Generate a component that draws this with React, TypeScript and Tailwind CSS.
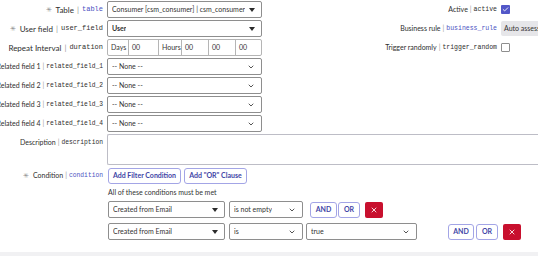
import { ChevronDown, Check, X } from 'lucide-react';

const Caret = () => (
  <svg width="6" height="4" viewBox="0 0 6 4" className="shrink-0">
    <path d="M0 0h6L3 4z" fill="#2b2b2b" />
  </svg>
);

const Label = ({ name, field, link, req, top, big }: { name: string; field: string; link?: boolean; req?: boolean; top?: boolean; big?: boolean }) => (
  <div className={`w-[103px] shrink-0 h-[17px] flex justify-end items-center whitespace-nowrap text-[#2e2e2e] ${big ? 'text-[8px]' : 'text-[7px]'} ${top ? 'self-start' : ''}`}>
    {req && <span className="text-[#8a8a8a] mr-[4px] text-[7px]">✳</span>}
    <span>{name}</span>
    <span className={`text-[#9a9a9a] ${big ? 'mx-[3px]' : 'mx-[2px]'}`}>|</span>
    <span className={`font-['Liberation_Mono',monospace] ${big ? 'text-[7px]' : 'text-[6.3px]'} ${link ? 'text-[#4b51c2]' : 'text-[#2e2e2e]'}`}>{field}</span>
  </div>
);

const Select = ({ text, w, chevron, bold }: { text: string; w: string; chevron?: boolean; bold?: boolean }) => (
  <div className={`${w} h-[17px] shrink-0 border border-[#8e8e8e] rounded-[2px] bg-white flex items-center justify-between pl-[4px] pr-[6px] text-[7px] text-[#333] ${bold ? 'font-bold' : ''}`}>
    <span className="truncate">{text}</span>
    {chevron ? <ChevronDown size={8} strokeWidth={2.5} color="#333" /> : <Caret />}
  </div>
);

const Btn = ({ children, w }: { children: React.ReactNode; w: string }) => (
  <div className={`${w} h-[16px] shrink-0 border border-[#a3a5e6] rounded-[3px] bg-white flex items-center justify-center text-[7px] font-bold text-[#4145a6]`}>
    {children}
  </div>
);

const Del = () => (
  <div className="w-[18px] h-[16px] shrink-0 bg-[#c8102e] rounded-[2px] flex items-center justify-center">
    <X size={8} strokeWidth={2.5} color="#fff" />
  </div>
);

const Right = ({ name, field, link, children }: { name: string; field: string; link?: boolean; children: React.ReactNode }) => (
  <div className="flex-1 flex items-center justify-end whitespace-nowrap text-[7px] text-[#2e2e2e]">
    <span>{name}</span>
    <span className="text-[#9a9a9a] mx-[2px]">|</span>
    <span className={`font-['Liberation_Mono',monospace] text-[6.5px] ${link ? 'text-[#4b51c2]' : ''}`}>{field}</span>
    <div className="w-[37px] ml-[4px] shrink-0 flex">{children}</div>
  </div>
);

const Box = ({ text, w }: { text: string; w: string }) => (
  <div className={`${w} h-[15px] border-r border-[#b5b5b5] last:border-r-0 flex items-center pl-[3px] text-[7px] text-[#333]`}>{text}</div>
);

export default function App() {
  return (
    <div className="w-[538px] h-[256px] overflow-hidden bg-white font-['Lato',sans-serif] flex flex-col">
      <div className="pt-[1px] flex flex-col gap-[2px]">
        <div className="flex items-center gap-[4px]">
          <Label name="Table" field="table" link req big />
          <Select text="Consumer [csm_consumer] | csm_consumer" w="w-[155px]" />
          <Right name="Active" field="active">
            <div className="w-[9px] h-[9px] bg-[#5257c8] rounded-[1px] flex items-center justify-center">
              <Check size={7} strokeWidth={3} color="#fff" />
            </div>
          </Right>
        </div>
        <div className="flex items-center gap-[4px]">
          <Label name="User field" field="user_field" req big />
          <Select text="User" w="w-[155px]" bold />
          <Right name="Business rule" field="business_rule" link>
            <div className="w-[60px] h-[15px] bg-[#e6e6e9] rounded-l-[2px] flex items-center pl-[3px] text-[7px] text-[#333] whitespace-nowrap">Auto assess</div>
          </Right>
        </div>
        <div className="flex items-center gap-[4px]">
          <Label name="Repeat Interval" field="duration" big />
          <div className="w-[155px] h-[17px] shrink-0 border border-[#b5b5b5] rounded-[2px] flex">
            <Box text="Days" w="w-[21px]" />
            <Box text="00" w="w-[30px]" />
            <Box text="Hours" w="w-[23px]" />
            <Box text="00" w="w-[27px]" />
            <Box text="00" w="w-[27px]" />
            <Box text="00" w="flex-1" />
          </div>
          <Right name="Trigger randomly" field="trigger_random">
            <div className="w-[9px] h-[9px] border border-[#8e8e8e] rounded-[1px] bg-white" />
          </Right>
        </div>
        {[1, 2, 3, 4].map((n) => (
          <div key={n} className="flex items-center gap-[4px]">
            <Label name={`Related field ${n}`} field={`related_field_${n}`} />
            <Select text="-- None --" w="w-[155px]" chevron />
          </div>
        ))}
        <div className="flex gap-[4px]">
          <Label name="Description" field="description" top />
          <div className="flex-1 h-[31px] border border-[#bdbdc6] border-r-0 rounded-l-[2px]" />
        </div>
        <div className="flex items-center gap-[4px]">
          <Label name="Condition" field="condition" link req />
          <div className="flex gap-[3px] pl-[1px]">
            <Btn w="w-[73px]">Add Filter Condition</Btn>
            <Btn w="w-[63px]">Add "OR" Clause</Btn>
          </div>
        </div>
        <div className="pl-[108px] text-[7px] text-[#333] leading-[12px]">All of these conditions must be met</div>
      </div>
      <div className="pl-[108px] mt-[3px] flex flex-col gap-[5px]">
        <div className="flex items-center">
          <Select text="Created from Email" w="w-[117px]" />
          <div className="w-[4px]" />
          <Select text="is not empty" w="w-[74px]" chevron />
          <div className="flex ml-[7px] gap-[1px]">
            <Btn w="w-[27px]">AND</Btn>
            <Btn w="w-[22px]">OR</Btn>
          </div>
          <div className="ml-[5px]"><Del /></div>
        </div>
        <div className="flex items-center">
          <Select text="Created from Email" w="w-[117px]" />
          <div className="w-[4px]" />
          <Select text="is" w="w-[74px]" chevron />
          <div className="w-[3px]" />
          <Select text="true" w="w-[111px]" chevron />
          <div className="flex ml-[31px] gap-[2px]">
            <Btn w="w-[26px]">AND</Btn>
            <Btn w="w-[22px]">OR</Btn>
          </div>
          <div className="ml-[5px]"><Del /></div>
        </div>
      </div>
      <div className="mt-auto h-[4px] bg-[#f1f1f3]" />
    </div>
  );
}
